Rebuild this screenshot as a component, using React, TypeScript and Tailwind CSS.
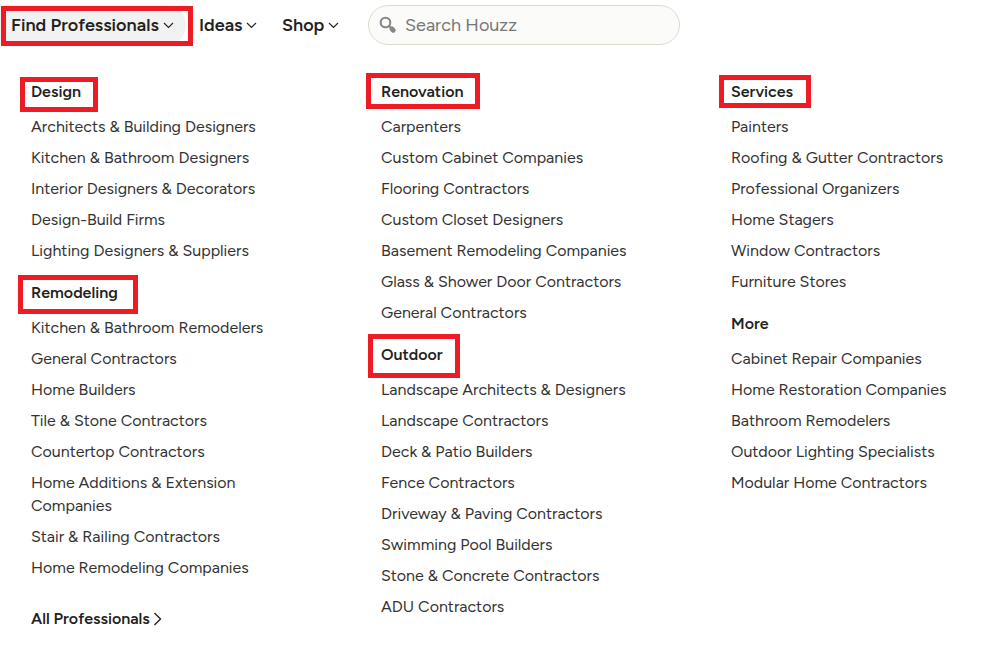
import { useState } from 'react';
import clsx from 'clsx';

interface Group {
  title: string;
  items: string[];
  // red frame drawn over the title
  frame?: string;
}

const columns: Group[][] = [
  [
    {
      title: 'Design',
      frame: '-left-[11px] -top-[3px] w-[78px] h-[35px]',
      items: [
        'Architects & Building Designers',
        'Kitchen & Bathroom Designers',
        'Interior Designers & Decorators',
        'Design-Build Firms',
        'Lighting Designers & Suppliers',
      ],
    },
    {
      title: 'Remodeling',
      frame: '-left-[13px] -top-[6px] w-[120px] h-[39px]',
      items: [
        'Kitchen & Bathroom Remodelers',
        'General Contractors',
        'Home Builders',
        'Tile & Stone Contractors',
        'Countertop Contractors',
        'Home Additions & Extension Companies',
        'Stair & Railing Contractors',
        'Home Remodeling Companies',
      ],
    },
  ],
  [
    {
      title: 'Renovation',
      frame: '-left-[15px] -top-[7px] w-[114px] h-[36px]',
      items: [
        'Carpenters',
        'Custom Cabinet Companies',
        'Flooring Contractors',
        'Custom Closet Designers',
        'Basement Remodeling Companies',
        'Glass & Shower Door Contractors',
        'General Contractors',
      ],
    },
    {
      title: 'Outdoor',
      frame: '-left-[13px] -top-[9px] w-[92px] h-[44px]',
      items: [
        'Landscape Architects & Designers',
        'Landscape Contractors',
        'Deck & Patio Builders',
        'Fence Contractors',
        'Driveway & Paving Contractors',
        'Swimming Pool Builders',
        'Stone & Concrete Contractors',
        'ADU Contractors',
      ],
    },
  ],
  [
    {
      title: 'Services',
      frame: '-left-[12px] -top-[5px] w-[92px] h-[33px]',
      items: [
        'Painters',
        'Roofing & Gutter Contractors',
        'Professional Organizers',
        'Home Stagers',
        'Window Contractors',
        'Furniture Stores',
      ],
    },
    {
      title: 'More',
      items: [
        'Cabinet Repair Companies',
        'Home Restoration Companies',
        'Bathroom Remodelers',
        'Outdoor Lighting Specialists',
        'Modular Home Contractors',
      ],
    },
  ],
];

function Frame({ className }: { className: string }) {
  return (
    <span
      aria-hidden="true"
      className={clsx('pointer-events-none absolute border-5 border-[#ed1c24]', className)}
    />
  );
}

function ChevronDown() {
  return (
    <svg width="11" height="7" viewBox="0 0 11 7" fill="none" stroke="currentColor" strokeWidth="1.1">
      <path d="M1 1l4.5 4.5L10 1" />
    </svg>
  );
}

function SearchIcon() {
  return (
    <svg width="18" height="18" viewBox="0 0 18 18" fill="none" stroke="#888" className="shrink-0">
      <circle cx="6.5" cy="6.5" r="4.8" strokeWidth="2.1" />
      <path d="M10 10l2.5 2.5" strokeWidth="2" />
      <path d="M13 13l1.2 1.2" strokeWidth="5" strokeLinecap="round" />
    </svg>
  );
}

function LinkGroup({ title, items, frame }: Group) {
  return (
    <section>
      <h2 className="relative mb-3 font-semibold">
        {title}
        {frame && <Frame className={frame} />}
      </h2>
      <ul className="flex flex-col gap-2">
        {items.map((item) => (
          <li key={item}>
            <a href="#" className="block text-[#333] hover:underline">
              {item}
            </a>
          </li>
        ))}
      </ul>
    </section>
  );
}

export default function App() {
  const [query, setQuery] = useState('');

  return (
    <div className="min-h-screen bg-white font-[Figtree,Lato,sans-serif] text-[#222]">
      <header className="flex items-center pt-[5px] text-lg font-semibold">
        <nav className="flex items-center">
          <div className="relative">
            <button
              type="button"
              aria-expanded="true"
              className="flex h-10 w-[186px] items-center gap-1 rounded-r-full bg-[#f2f2f2] pl-[11px]"
            >
              Find Professionals
              <ChevronDown />
            </button>
            <Frame className="left-px top-px h-10 w-[192px]" />
          </div>
          <button type="button" className="ml-[13px] flex h-10 w-[70px] items-center gap-1">
            Ideas
            <ChevronDown />
          </button>
          <button type="button" className="ml-[13px] flex h-10 w-[70px] items-center gap-1">
            Shop
            <ChevronDown />
          </button>
        </nav>
        <label className="ml-4 flex h-10 w-[312px] items-center gap-2 rounded-full border border-[#dedbcd] bg-[#fbfbf9] pl-[10px] pr-4 font-normal">
          <SearchIcon />
          <input
            type="text"
            aria-label="Search Houzz"
            placeholder="Search Houzz"
            value={query}
            onChange={(e) => setQuery(e.target.value)}
            className="min-w-0 flex-1 bg-transparent outline-none placeholder:text-[#777]"
          />
        </label>
      </header>

      <main className="pb-4 pl-[31px] pr-4 pt-[35px] text-base leading-[23px]">
        <div className="grid grid-cols-3 gap-x-[90px]">
          {columns.map((groups, i) => (
            <div key={i} className="flex flex-col gap-[19px]">
              {groups.map((group) => (
                <LinkGroup key={group.title} {...group} />
              ))}
              {i === 0 && (
                <a href="#" className="mt-[9px] flex items-center gap-[3px] font-semibold">
                  All Professionals
                  <svg width="9" height="14" viewBox="0 0 9 14" fill="none" stroke="currentColor" strokeWidth="1.4">
                    <path d="M1.5 1l6 6-6 6" />
                  </svg>
                </a>
              )}
            </div>
          ))}
        </div>
      </main>
    </div>
  );
}
